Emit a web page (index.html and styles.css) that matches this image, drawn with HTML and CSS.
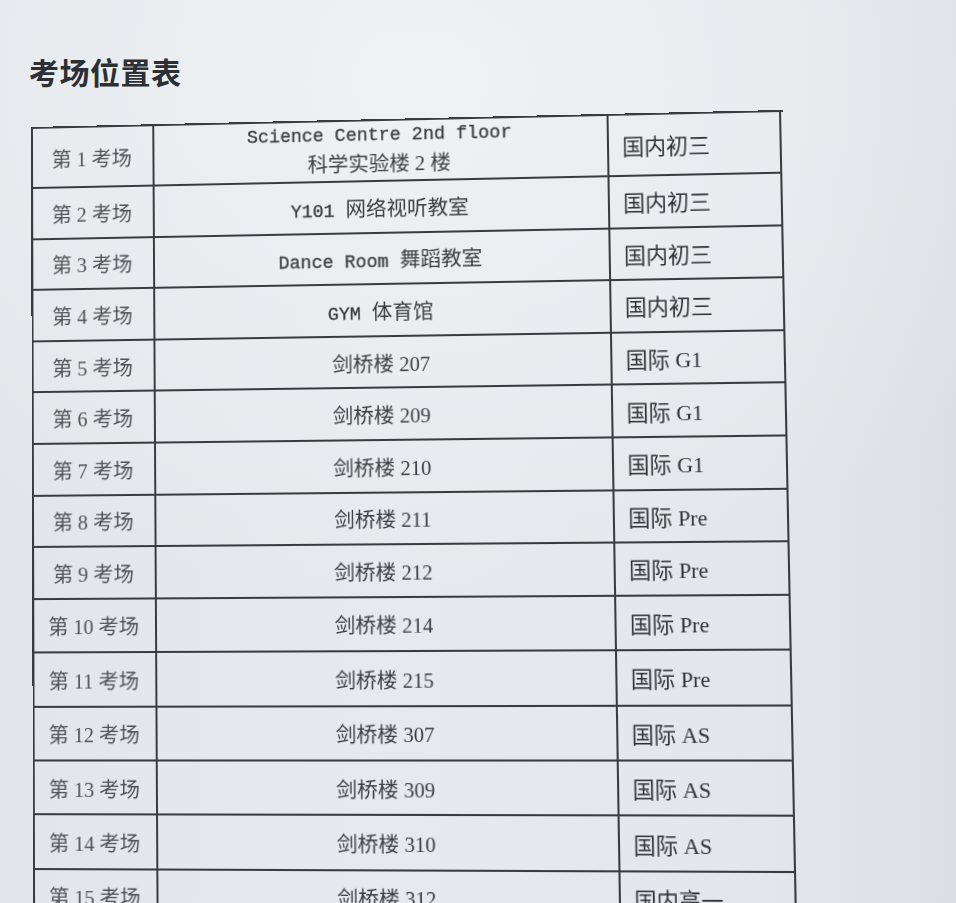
FILE: index.html
```html
<!DOCTYPE html>
<html lang="zh-CN">
<head>
<meta charset="utf-8">
<title>考场位置表</title>
<link rel="stylesheet" href="styles.css">
</head>
<body>
<div class="sheet">
  <h1 class="title">考场位置表</h1>
  <div class="table">
    <div class="cell c1">第 1 考场</div>
    <div class="cell c2 two"><span class="mono">Science Centre 2nd floor</span><span>科学实验楼 2 楼</span></div>
    <div class="cell c3">国内初三</div>

    <div class="cell c1">第 2 考场</div>
    <div class="cell c2"><span class="line"><span class="mono">Y101 </span><span class="cjk">网络视听教室</span></span></div>
    <div class="cell c3">国内初三</div>

    <div class="cell c1">第 3 考场</div>
    <div class="cell c2"><span class="line"><span class="mono">Dance Room </span><span class="cjk">舞蹈教室</span></span></div>
    <div class="cell c3">国内初三</div>

    <div class="cell c1">第 4 考场</div>
    <div class="cell c2"><span class="line"><span class="mono">GYM </span><span class="cjk">体育馆</span></span></div>
    <div class="cell c3">国内初三</div>

    <div class="cell c1">第 5 考场</div>
    <div class="cell c2">剑桥楼 207</div>
    <div class="cell c3">国际 G1</div>

    <div class="cell c1">第 6 考场</div>
    <div class="cell c2">剑桥楼 209</div>
    <div class="cell c3">国际 G1</div>

    <div class="cell c1">第 7 考场</div>
    <div class="cell c2">剑桥楼 210</div>
    <div class="cell c3">国际 G1</div>

    <div class="cell c1">第 8 考场</div>
    <div class="cell c2">剑桥楼 211</div>
    <div class="cell c3">国际 Pre</div>

    <div class="cell c1">第 9 考场</div>
    <div class="cell c2">剑桥楼 212</div>
    <div class="cell c3">国际 Pre</div>

    <div class="cell c1">第 10 考场</div>
    <div class="cell c2">剑桥楼 214</div>
    <div class="cell c3">国际 Pre</div>

    <div class="cell c1">第 11 考场</div>
    <div class="cell c2">剑桥楼 215</div>
    <div class="cell c3">国际 Pre</div>

    <div class="cell c1">第 12 考场</div>
    <div class="cell c2">剑桥楼 307</div>
    <div class="cell c3">国际 AS</div>

    <div class="cell c1">第 13 考场</div>
    <div class="cell c2">剑桥楼 309</div>
    <div class="cell c3">国际 AS</div>

    <div class="cell c1">第 14 考场</div>
    <div class="cell c2">剑桥楼 310</div>
    <div class="cell c3">国际 AS</div>

    <div class="cell c1">第 15 考场</div>
    <div class="cell c2">剑桥楼 312</div>
    <div class="cell c3">国内高一</div>
  </div>
</div>
</body>
</html>
```

FILE: styles.css
```css
html, body {
  margin: 0;
  padding: 0;
  width: 956px;
  height: 903px;
  overflow: hidden;
}

body {
  background:
    radial-gradient(ellipse 700px 520px at 420px 80px, rgba(240, 242, 245, 0.9), rgba(240, 242, 245, 0) 100%),
    linear-gradient(90deg, #e2e6ea 0%, #e6e9ed 40%, #e3e7eb 80%, #dce0e5 100%);
  font-family: "Liberation Serif", "Noto Sans CJK SC", serif;
  color: #363a3e;
}

.sheet {
  display: flex;
  flex-direction: column;
  padding-top: 55px;
}

.title {
  margin: 0 0 0 29px;
  font-family: "Noto Sans CJK SC", sans-serif;
  font-weight: 700;
  font-size: 30px;
  line-height: 32px;
  height: 32px;
  color: #2c2f33;
  letter-spacing: 0.5px;
}

.table {
  margin: 40px 0 0 31px;
  width: 750px;
  display: grid;
  grid-template-columns: 124px 455px 169px;
  grid-template-rows: 61px repeat(8, 51.6px) repeat(6, 53.4px);
  border-top: 2px solid #383b40;
  border-left: 2px solid #383b40;
  transform-origin: 0 0;
  transform: matrix3d(0.97378, -0.022101, 0, -0.000035001, 0.0026545, 0.98346, 0, -0.000022327, 0, 0, 1, 0, 0, 0, 0, 1);
}

.cell {
  box-sizing: border-box;
  border-right: 2px solid #383b40;
  border-bottom: 2px solid #383b40;
  display: flex;
  align-items: center;
  min-width: 0;
  white-space: pre;
}

.c1 {
  justify-content: center;
  font-size: 20.5px;
  color: #4e5256;
  padding-right: 2px;
}

.c2 {
  justify-content: center;
  font-size: 20.5px;
  color: #3a3e42;
}

.c2.two {
  flex-direction: column;
  justify-content: center;
  line-height: 29px;
  padding-bottom: 2px;
}

.line {
  display: block;
}

.mono {
  font-family: "Liberation Mono", monospace;
  font-size: 18.4px;
  -webkit-text-stroke: 0.3px currentColor;
}

.cjk {
  font-size: 20.5px;
}

.c2 .mono + span {
  font-size: 20.5px;
}

.c3 {
  justify-content: flex-start;
  padding-left: 13px;
  font-size: 21.5px;
  color: #2f3337;
}
```
